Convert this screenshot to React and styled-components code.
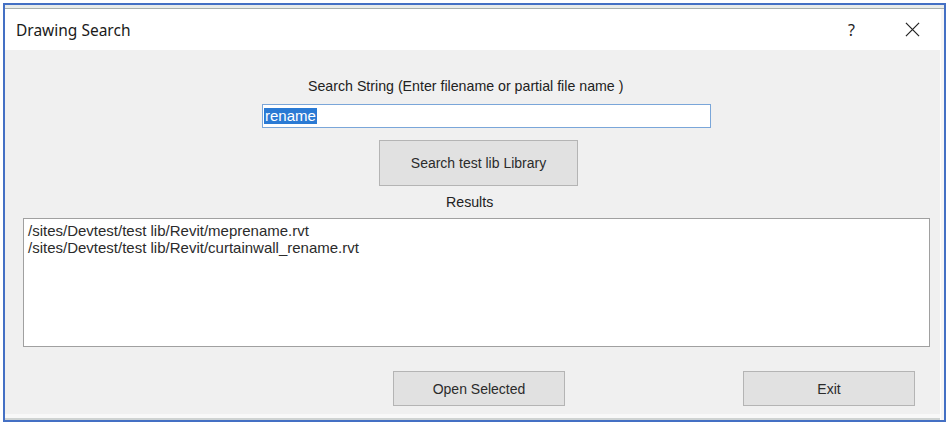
import styled, { createGlobalStyle } from "styled-components"

const GlobalStyle = createGlobalStyle`
    html, body {
        margin: 0;
        padding: 0;
        background: #ffffff;
    }
    * {
        box-sizing: border-box;
    }
`

export default function App() {
    const results = [
        '/sites/Devtest/test lib/Revit/meprename.rvt',
        '/sites/Devtest/test lib/Revit/curtainwall_rename.rvt',
    ]

    return (
        <>
            <GlobalStyle />
            <Page>
                <Frame>
                    <BackStrip />
                    <Window>
                        <TitleBar>
                            <Title>Drawing Search</Title>
                            <TitleButtons>
                                <HelpGlyph>?</HelpGlyph>
                                <CloseGlyph viewBox="0 0 16 16">
                                    <path d="M1 1 L15 15 M15 1 L1 15" stroke="#222" strokeWidth="1.3" fill="none" />
                                </CloseGlyph>
                            </TitleButtons>
                        </TitleBar>
                        <Content>
                            <Label $left={303}>Search String (Enter filename or partial file name )</Label>
                            <SearchInput $left={257}>
                                <Selected>rename</Selected>
                            </SearchInput>
                            <SearchButton $left={374}>Search test lib Library</SearchButton>
                            <Label $left={441} $top={8}>Results</Label>
                            <ResultsList>
                                {results.map((r, i) => (
                                    <ResultRow key={i}>{r}</ResultRow>
                                ))}
                            </ResultsList>
                            <ButtonRow>
                                <ActionButton $left={388}>Open Selected</ActionButton>
                                <ActionButton $left={178}>Exit</ActionButton>
                            </ButtonRow>
                        </Content>
                        <BottomEdge />
                    </Window>
                </Frame>
            </Page>
        </>
    )
}

const Page = styled.div`
    width: 950px;
    height: 424px;
    padding: 3px 4px 2px 3px;
    background: #ffffff;
`

const Frame = styled.div`
    width: 943px;
    height: 419px;
    border: 2px solid #4470c4;
    display: flex;
    flex-direction: column;
    background: #f6f6f6;
`

const BackStrip = styled.div`
    height: 4px;
    background: #e9ecea;
    border-bottom: 1px solid #a9b0ad;
`

const Window = styled.div`
    flex: 1;
    display: flex;
    flex-direction: column;
    margin-right: 3px;
    border-right: 1px solid #ffffff;
`

const TitleBar = styled.div`
    height: 41px;
    background: #ffffff;
    display: flex;
    align-items: center;
    justify-content: space-between;
    padding: 0 20px 0 11px;
`

const Title = styled.span`
    font-family: "Noto Sans", "Open Sans", sans-serif;
    font-size: 15.5px;
    color: #1a1a1a;
    padding-top: 1px;
`

const TitleButtons = styled.div`
    display: flex;
    align-items: center;
    gap: 50px;
`

const HelpGlyph = styled.span`
    font-family: "Noto Sans", sans-serif;
    font-size: 16px;
    color: #222;
`

const CloseGlyph = styled.svg`
    width: 15px;
    height: 15px;
`

const Content = styled.div`
    flex: 1;
    background: #f0f0f0;
    display: flex;
    flex-direction: column;
    align-items: flex-start;
    padding-top: 28px;
`

const Label = styled.div`
    margin-left: ${p => p.$left}px;
    margin-top: ${p => p.$top || 0}px;
    font-family: "Liberation Sans", Arial, sans-serif;
    font-size: 14.2px;
    line-height: 16px;
    color: #222;
`

const SearchInput = styled.div`
    margin-left: ${p => p.$left}px;
    margin-top: 10px;
    width: 449px;
    height: 24px;
    background: #ffffff;
    border: 1px solid #7aa6d9;
    display: flex;
    align-items: center;
    padding-left: 1px;
`

const Selected = styled.span`
    background: #2a7ad4;
    color: #ffffff;
    font-family: "Liberation Sans", Arial, sans-serif;
    font-size: 15px;
    line-height: 16px;
    padding: 0 1px;
`

const SearchButton = styled.div`
    margin-left: ${p => p.$left}px;
    margin-top: 12px;
    width: 199px;
    height: 46px;
    background: #e1e1e1;
    border: 1px solid #b4b4b4;
    display: flex;
    align-items: center;
    justify-content: center;
    font-family: "Liberation Sans", Arial, sans-serif;
    font-size: 14px;
    color: #2b2b2b;
`

const ResultsList = styled.div`
    margin-left: 18px;
    margin-top: 8px;
    width: 907px;
    height: 129px;
    background: #ffffff;
    border: 1px solid #a0a0a0;
    padding: 3px 4px;
`

const ResultRow = styled.div`
    font-family: "Liberation Sans", Arial, sans-serif;
    font-size: 15px;
    line-height: 17px;
    color: #2b2b2b;
`

const ButtonRow = styled.div`
    display: flex;
    margin-top: 24px;
`

const ActionButton = styled.div`
    margin-left: ${p => p.$left}px;
    width: 172px;
    height: 35px;
    background: #e1e1e1;
    border: 1px solid #b4b4b4;
    display: flex;
    align-items: center;
    justify-content: center;
    font-family: "Liberation Sans", Arial, sans-serif;
    font-size: 14px;
    color: #2b2b2b;
`

const BottomEdge = styled.div`
    height: 6px;
    background: #f8f8f8;
    border-bottom: 2px solid #cfd3d2;
`
